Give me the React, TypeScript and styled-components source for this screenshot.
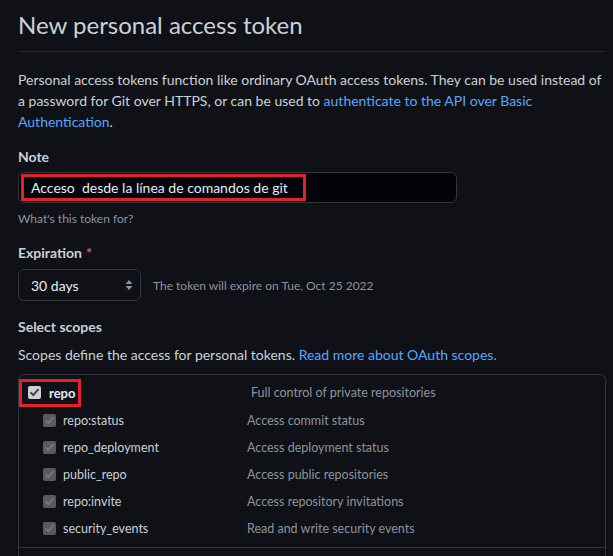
import React from "react";
import styled, { createGlobalStyle } from "styled-components";

const Global = createGlobalStyle`
  html, body { margin: 0; padding: 0; background: #0f1116; }
  body { font-family: Lato, "Liberation Sans", Arial, sans-serif; color: #c9d1d9; }
  * { box-sizing: border-box; }
`;

const Page = styled.div`
  width: 613px;
  height: 556px;
  overflow: hidden;
  padding: 0 8px 0 18px;
  background: #0f1116;
`;

const Title = styled.h2`
  margin: 0;
  padding: 10px 0 11px;
  font-size: 24px;
  line-height: 30px;
  font-weight: 400;
  color: #c9d1d9;
  border-bottom: 1px solid #22262d;
`;

const Intro = styled.p`
  margin: 17px 0 0;
  font-size: 14px;
  line-height: 21px;
  color: #c9d1d9;
`;

const Link = styled.a`
  color: #58a6ff;
  text-decoration: none;
`;

const Group = styled.div<{ $top: number }>`
  margin-top: ${(p) => p.$top}px;
  display: flex;
  flex-direction: column;
  align-items: flex-start;
`;

const Label = styled.div`
  font-size: 14px;
  line-height: 21px;
  font-weight: 700;
  color: #c9d1d9;
`;

const Star = styled.span`
  color: #f85149;
  margin-left: 4px;
`;

const Input = styled.div`
  margin-top: 5px;
  width: 439px;
  height: 31px;
  background: #02040a;
  border: 1px solid #30363d;
  border-radius: 6px;
  padding: 1px 2px;
  display: flex;
  align-items: center;
`;

const Highlight = styled.span`
  height: 27px;
  border: 3px solid #e1222b;
  padding: 0 15px 0 7px;
  font-size: 14px;
  line-height: 21px;
  color: #e6edf3;
  white-space: pre;
`;

const Hint = styled.div`
  margin-top: 7px;
  font-size: 12px;
  line-height: 18px;
  color: #8b949e;
`;

const SelectRow = styled.div`
  margin-top: 6px;
  display: flex;
  align-items: center;
  gap: 12px;
`;

const Select = styled.div`
  width: 123px;
  height: 32px;
  border: 1px solid #30363d;
  border-radius: 6px;
  background: #0f1116;
  display: flex;
  align-items: center;
  justify-content: space-between;
  padding: 0 7px 0 12px;
  font-size: 14px;
  color: #e6edf3;
`;

const Expire = styled.span`
  font-size: 12px;
  color: #8b949e;
`;

const Desc = styled.div`
  margin-top: 7px;
  font-size: 14px;
  line-height: 21px;
  color: #c9d1d9;
`;

const Scopes = styled.div`
  margin-top: 9px;
  width: 588px;
  height: 200px;
  border: 1px solid #30363d;
  border-bottom: none;
  border-radius: 6px 6px 0 0;
  display: flex;
  flex-direction: column;
`;

const ParentRow = styled.div`
  display: grid;
  grid-template-columns: 232px 1fr;
  align-items: center;
  padding: 3px 0 0 0;
  height: 32px;
`;

const ParentCell = styled.div`
  display: inline-flex;
  align-items: center;
  gap: 8px;
  width: 62px;
  height: 28px;
  border: 3px solid #e1222b;
  padding-left: 6px;
  font-size: 13px;
  font-weight: 700;
  color: #e6edf3;
`;

const Children = styled.div`
  display: flex;
  flex-direction: column;
`;

const ChildRow = styled.div`
  display: grid;
  grid-template-columns: 228px 1fr;
  align-items: center;
  height: 27px;
`;

const ChildCell = styled.div`
  display: flex;
  align-items: center;
  gap: 7px;
  padding-left: 24px;
  font-size: 12.5px;
  color: #c9d1d9;
`;

const ScopeText = styled.span`
  font-size: 12.5px;
  color: #8b949e;
`;

const Separator = styled.div`
  margin-top: 5px;
  border-top: 1px solid #30363d;
`;

const Box = styled.svg`
  flex: none;
  display: block;
`;

function Check({ disabled }: { disabled?: boolean }) {
  const bg = disabled ? "#5a5b5e" : "#cfd0d2";
  const mark = disabled ? "#77787b" : "#3b3c3f";
  return (
    <Box width="13" height="13" viewBox="0 0 13 13">
      <rect x="0" y="0" width="13" height="13" rx="2" fill={bg} />
      <path d="M3 6.8 L5.3 9.2 L10 3.6" stroke={mark} strokeWidth="1.8" fill="none" strokeLinecap="round" strokeLinejoin="round" />
    </Box>
  );
}

function Stepper() {
  return (
    <Box width="8" height="12" viewBox="0 0 8 12">
      <path d="M4 1 L7.5 5 L0.5 5 Z" fill="#8b949e" />
      <path d="M4 11 L7.5 7 L0.5 7 Z" fill="#8b949e" />
    </Box>
  );
}

const children = [
  ["repo:status", "Access commit status"],
  ["repo_deployment", "Access deployment status"],
  ["public_repo", "Access public repositories"],
  ["repo:invite", "Access repository invitations"],
  ["security_events", "Read and write security events"],
];

export default function App() {
  return (
    <>
      <Global />
      <Page>
        <Title>New personal access token</Title>
        <Intro>
          Personal access tokens function like ordinary OAuth access tokens. They can be used instead of a
          password for Git over HTTPS, or can be used to{" "}
          <Link>authenticate to the API over Basic Authentication</Link>.
        </Intro>

        <Group $top={14}>
          <Label>Note</Label>
          <Input>
            <Highlight>{"Acceso  desde la línea de comandos de git"}</Highlight>
          </Input>
          <Hint>What's this token for?</Hint>
        </Group>

        <Group $top={14}>
          <Label>
            Expiration<Star>*</Star>
          </Label>
          <SelectRow>
            <Select>
              <span>30 days</span>
              <Stepper />
            </Select>
            <Expire>The token will expire on Tue, Oct 25 2022</Expire>
          </SelectRow>
        </Group>

        <Group $top={15}>
          <Label>Select scopes</Label>
          <Desc>
            Scopes define the access for personal tokens. <Link>Read more about OAuth scopes.</Link>
          </Desc>
        </Group>

        <Scopes>
          <ParentRow>
            <div>
              <ParentCell>
                <Check />
                <span>repo</span>
              </ParentCell>
            </div>
            <ScopeText>Full control of private repositories</ScopeText>
          </ParentRow>
          <Children>
            {children.map(([name, desc]) => (
              <ChildRow key={name}>
                <ChildCell>
                  <Check disabled />
                  <span>{name}</span>
                </ChildCell>
                <ScopeText>{desc}</ScopeText>
              </ChildRow>
            ))}
          </Children>
          <Separator />
        </Scopes>
      </Page>
    </>
  );
}
